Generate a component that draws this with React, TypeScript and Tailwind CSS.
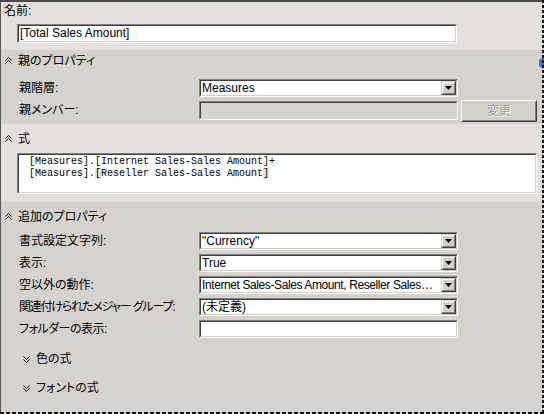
import React from 'react';

const PINK = 'bg-[#e7dfdd]';
const GRAY = 'bg-[#d6d3ce]';

function Chevrons({ up }: { up: boolean }) {
    return (
        <svg width="7" height="7" viewBox="0 0 7 7" className="shrink-0">
            {up ? (
                <path d="M0.5 3.5L3.5 0.5L6.5 3.5M0.5 6.5L3.5 3.5L6.5 6.5" stroke="#000" fill="none" />
            ) : (
                <path d="M0.5 0.5L3.5 3.5L6.5 0.5M0.5 3.5L3.5 6.5L6.5 3.5" stroke="#000" fill="none" />
            )}
        </svg>
    );
}

// classic sunken 3D frame
function Sunken({ className, children }: { className?: string; children?: React.ReactNode }) {
    return (
        <div className={`flex border border-t-[#808080] border-l-[#808080] border-b-white border-r-white ${className ?? ''}`}>
            <div className="flex flex-1 min-w-0 border border-t-[#404040] border-l-[#404040] border-b-[#d4d0c8] border-r-[#d4d0c8]">
                {children}
            </div>
        </div>
    );
}

function DropButton() {
    return (
        <div className="flex w-[15px] shrink-0 border border-t-[#d4d0c8] border-l-[#d4d0c8] border-b-[#404040] border-r-[#404040] bg-[#d4d0c8]">
            <div className="flex flex-1 items-center justify-center border border-t-white border-l-white border-b-[#808080] border-r-[#808080]">
                <svg width="7" height="4" viewBox="0 0 7 4">
                    <path d="M0 0H7L3.5 4Z" fill="#000" />
                </svg>
            </div>
        </div>
    );
}

function Combo({ value, tight }: { value: string; tight?: boolean }) {
    return (
        <Sunken className="h-[18px] w-[259px]">
            <div className="flex flex-1 min-w-0 bg-white">
                <span className={`flex-1 overflow-hidden whitespace-nowrap pl-[1px] text-[12px] leading-[14px] text-black ${tight ? 'tracking-[-0.4px]' : ''}`}>
                    {value}
                </span>
                <DropButton />
            </div>
        </Sunken>
    );
}

function TextBox({ value }: { value?: string }) {
    return (
        <Sunken className="h-[18px] w-[259px]">
            <div className="flex-1 bg-white pl-[1px] text-[12px] leading-[14px]">{value}</div>
        </Sunken>
    );
}

function Header({ title, className }: { title: string; className: string }) {
    return (
        <div className={`flex items-center gap-[6px] pl-[4px] ${className}`}>
            <Chevrons up />
            <span className="text-[12px] leading-[14px]">{title}</span>
        </div>
    );
}

function PropRow({ label, labelClass, children }: { label: string; labelClass?: string; children: React.ReactNode }) {
    return (
        <div className="grid grid-cols-[180px_259px] items-center pl-[18px]">
            <span className={`whitespace-nowrap text-[12px] leading-[14px] ${labelClass ?? ''}`}>{label}</span>
            {children}
        </div>
    );
}

export default function App() {
    return (
        <div className="relative w-[544px] h-[414px] overflow-hidden bg-[#d6d3ce] text-black font-['Liberation_Sans','Noto_Sans_CJK_JP',sans-serif] [font-feature-settings:'palt']">
            <div className="flex h-[412px]">
                <div className="flex flex-1 flex-col border-t-2 border-l border-t-[#4a4a4a] border-l-[#5a5a5a]">
                    {/* 名前 */}
                    <div className={`${PINK} h-[48px] flex flex-col`}>
                        <div className="pl-[3px] h-[18px] text-[12px] leading-[18px]">名前:</div>
                        <Sunken className="mt-[4px] ml-[16px] h-[19px] w-[440px]">
                            <div className="flex-1 bg-white pl-[1px] text-[12px] leading-[15px]">[Total Sales Amount]</div>
                        </Sunken>
                    </div>

                    {/* 親のプロパティ */}
                    <div className={`${GRAY} h-[74px] flex flex-col`}>
                        <Header title="親のプロパティ" className="h-[21px]" />
                        <div className="mt-[8px]">
                            <PropRow label="親階層:">
                                <Combo value="Measures" />
                            </PropRow>
                        </div>
                        <div className="mt-[3px] flex items-start pl-[18px]">
                            <span className="w-[180px] text-[12px] leading-[14px] mt-[3px]">親メンバー:</span>
                            <Sunken className="mt-[1px] h-[19px] w-[259px]">
                                <div className="flex-1 bg-[#d6d3ce]" />
                            </Sunken>
                            <div className="ml-[3px] flex h-[22px] w-[76px] border border-t-white border-l-white border-b-[#404040] border-r-[#404040] bg-[#d4d0c8]">
                                <div className="flex flex-1 items-center justify-center border border-t-[#d4d0c8] border-l-[#d4d0c8] border-b-[#808080] border-r-[#808080]">
                                    <span className="text-[12px] leading-[14px] text-[#9a9a9a] [text-shadow:1px_1px_0_#ffffff]">変更</span>
                                </div>
                            </div>
                        </div>
                    </div>

                    {/* 式 */}
                    <div className={`${PINK} h-[78px] flex flex-col`}>
                        <Header title="式" className="h-[29px]" />
                        <Sunken className="ml-[16px] h-[41px] w-[520px]">
                            <div className="flex-1 bg-white pl-[10px] pt-[1px] font-['Liberation_Mono',monospace] text-[10px] leading-[12px] whitespace-pre">
                                <div>[Measures].[Internet Sales-Sales Amount]+</div>
                                <div>
                                    [Measures].<span className="bg-[#e6ead8]">[</span>Reseller Sales-Sales Amount
                                    <span className="bg-[#e6ead8]">]</span>
                                </div>
                            </div>
                        </Sunken>
                    </div>

                    {/* 追加のプロパティ */}
                    <div className={`${GRAY} flex-1 flex flex-col`}>
                        <Header title="追加のプロパティ" className="h-[29px]" />
                        <div className="mt-[1px] flex flex-col gap-[4px]">
                            <PropRow label="書式設定文字列:">
                                <Combo value={'"Currency"'} />
                            </PropRow>
                            <PropRow label="表示:">
                                <Combo value="True" />
                            </PropRow>
                            <PropRow label="空以外の動作:">
                                <Combo value="Internet Sales-Sales Amount, Reseller Sales…" tight />
                            </PropRow>
                            <PropRow label="関連付けられたメジャー グループ:" labelClass="tracking-[-1.2px]">
                                <Combo value="(未定義)" />
                            </PropRow>
                            <PropRow label="フォルダーの表示:" labelClass="tracking-[-0.5px]">
                                <TextBox />
                            </PropRow>
                        </div>
                        <div className="mt-[11px] flex h-[20px] items-center gap-[6px] pl-[22px]">
                            <Chevrons up={false} />
                            <span className="text-[12px] leading-[14px]">色の式</span>
                        </div>
                        <div className="mt-[9px] flex h-[20px] items-center gap-[6px] pl-[22px]">
                            <Chevrons up={false} />
                            <span className="text-[12px] leading-[14px]">フォントの式</span>
                        </div>
                    </div>
                </div>
                <div className="relative z-10 w-[2px] bg-[repeating-linear-gradient(to_bottom,#111_0_3px,transparent_3px_5px)]" />
            </div>
            <div className="relative z-10 h-[2px] bg-[repeating-linear-gradient(to_right,#111_0_4px,transparent_4px_6px)]" />

            {/* focus marker at the right edge */}
            <div className="absolute left-[539px] top-[58px] h-[10px] w-[8px] rounded-full bg-[#2f74d8]" />
        </div>
    );
}
